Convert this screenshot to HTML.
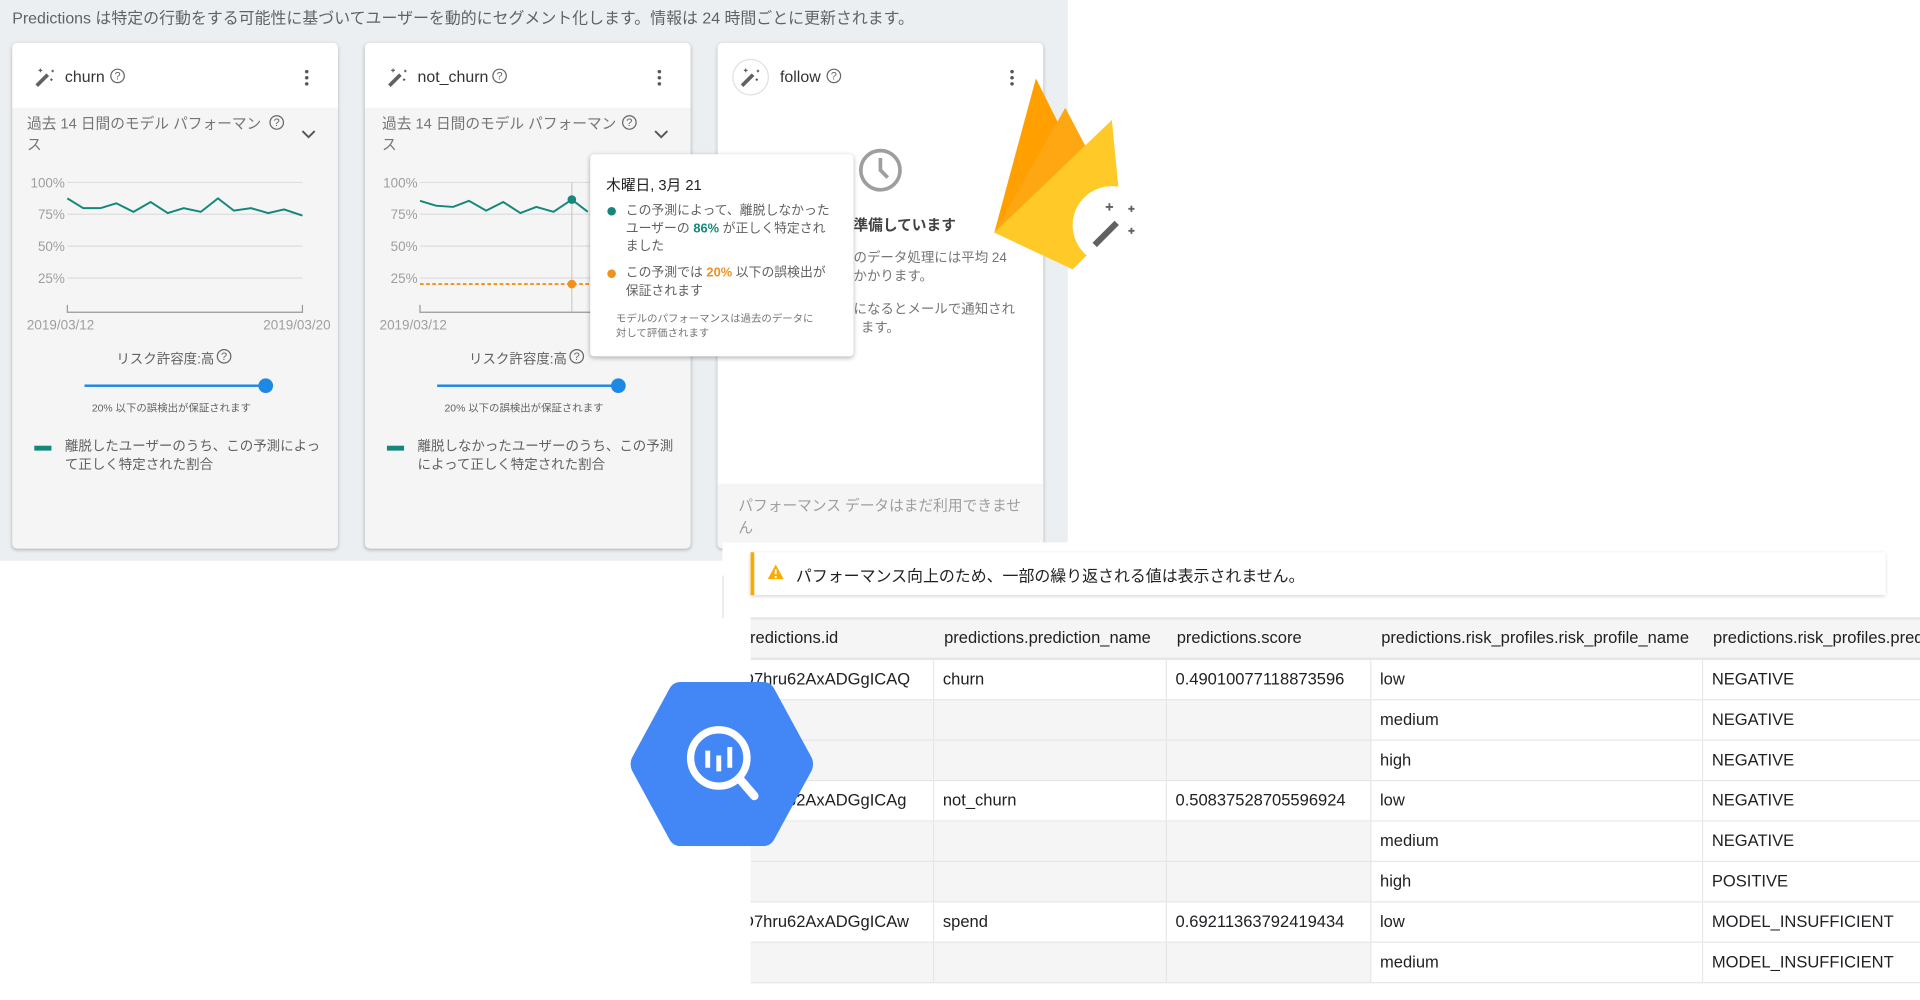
<!DOCTYPE html>
<html><head><meta charset="utf-8">
<style>
*{margin:0;padding:0;box-sizing:border-box}
html,body{width:1920px;height:1000px;overflow:hidden;background:#fff;font-family:"Liberation Sans","Noto Sans CJK JP",sans-serif}
#w{position:absolute;left:0;top:0;width:1568px;height:817px;transform:scale(1.22449);transform-origin:0 0}
.a{position:absolute;white-space:nowrap}
.card{position:absolute;top:35px;width:266px;height:413px;background:#f5f5f5;border-radius:4px;box-shadow:0 1px 3px rgba(0,0,0,.25);overflow:hidden}
.hd{position:absolute;left:0;top:0;width:100%;height:53px;background:#fff}
.g{color:#757575;font-size:12px}
.cell{position:absolute;height:33px;border-bottom:1px solid #e6e6e6;border-right:1px solid #e6e6e6;font-size:13.5px;line-height:32px;padding-left:7px;overflow:hidden;white-space:nowrap;color:#202124}
</style></head><body><div id="w">
<div class="a" style="left:0;top:0;width:872px;height:458px;background:#eceff1"></div>
<div class="a" style="left:10px;top:4px;font-size:13px;color:#5f6368">Predictions は特定の行動をする可能性に基づいてユーザーを動的にセグメント化します。情報は 24 時間ごとに更新されます。</div>

<!-- card 1 -->
<div class="card" style="left:10px">
 <div class="hd"></div>
 <svg class="a" style="left:17px;top:19px" width="20" height="18" viewBox="0 0 20 18"><path d="M3 16L12 7" stroke="#616161" stroke-width="3"/><path d="M6 2v3M4.5 3.5h3M16 3v2M15 4h2M15 10v2M14 11h2" stroke="#616161" stroke-width="1"/></svg>
 <div class="a" style="left:43px;top:20px;font-size:13px;color:#333">churn</div>
 <div class="a" style="left:80px;top:21px;width:12px;height:12px;border:1px solid #666;border-radius:50%;font-size:9px;line-height:10px;text-align:center;color:#666">?</div>
 <div class="a" style="left:239px;top:21px;width:3px;height:14px;background:radial-gradient(circle,#555 1.3px,transparent 1.6px) 0 0/3px 5px"></div>
 <div class="a g" style="left:12px;top:58px;line-height:17px">過去 14 日間のモデル パフォーマン<br>ス</div>
 <div class="a" style="left:210px;top:59px;width:12px;height:12px;border:1px solid #666;border-radius:50%;font-size:9px;line-height:10px;text-align:center;color:#666">?</div>
 <svg class="a" style="left:236px;top:71px" width="12" height="8"><path d="M1 1l5 5 5-5" stroke="#555" stroke-width="1.6" fill="none"/></svg>
 <svg class="a" style="left:0;top:100px" width="266" height="140"><g stroke="#ddd"><path d="M45 14H237M45 40H237M45 66H237M45 92H237"/></g><path d="M45 114v6H237v-6" stroke="#999" fill="none"/><g fill="#9e9e9e" font-size="11" text-anchor="end"><text x="43" y="18">100%</text><text x="43" y="44">75%</text><text x="43" y="70">50%</text><text x="43" y="96">25%</text></g><polyline fill="none" stroke="#13887a" stroke-width="1.6" points="45,27 58,35 72,35 85,31 99,38 113,30 127,39 140,35 154,38 168,27 181,37 195,35 209,39 222,36 237,41"/><g fill="#9e9e9e" font-size="11"><text x="12" y="134">2019/03/12</text><text x="205" y="134">2019/03/20</text></g></svg>
 <div class="a" style="left:85px;top:250px;font-size:11px;color:#616161">リスク許容度:高</div>
 <div class="a" style="left:167px;top:250px;width:12px;height:12px;border:1px solid #666;border-radius:50%;font-size:9px;line-height:10px;text-align:center;color:#666">?</div>
 <div class="a" style="left:59px;top:279px;width:148px;height:2px;background:#1e88e5"></div>
 <div class="a" style="left:201px;top:274px;width:12px;height:12px;border-radius:50%;background:#1e88e5"></div>
 <div class="a" style="left:65px;top:292px;font-size:8.5px;color:#616161">20% 以下の誤検出が保証されます</div>
 <div class="a" style="left:18px;top:329px;width:14px;height:4px;background:#13887a"></div>
 <div class="a" style="left:43px;top:323px;line-height:15px;font-size:11px;color:#616161">離脱したユーザーのうち、この予測によっ<br>て正しく特定された割合</div>
</div>

<!-- card 2 -->
<div class="card" style="left:298px">
 <div class="hd"></div>
 <svg class="a" style="left:17px;top:19px" width="20" height="18" viewBox="0 0 20 18"><path d="M3 16L12 7" stroke="#616161" stroke-width="3"/><path d="M6 2v3M4.5 3.5h3M16 3v2M15 4h2M15 10v2M14 11h2" stroke="#616161" stroke-width="1"/></svg>
 <div class="a" style="left:43px;top:20px;font-size:13px;color:#333">not_churn</div>
 <div class="a" style="left:104px;top:21px;width:12px;height:12px;border:1px solid #666;border-radius:50%;font-size:9px;line-height:10px;text-align:center;color:#666">?</div>
 <div class="a" style="left:239px;top:21px;width:3px;height:14px;background:radial-gradient(circle,#555 1.3px,transparent 1.6px) 0 0/3px 5px"></div>
 <div class="a g" style="left:14px;top:58px;line-height:17px">過去 14 日間のモデル パフォーマン<br>ス</div>
 <div class="a" style="left:210px;top:59px;width:12px;height:12px;border:1px solid #666;border-radius:50%;font-size:9px;line-height:10px;text-align:center;color:#666">?</div>
 <svg class="a" style="left:236px;top:71px" width="12" height="8"><path d="M1 1l5 5 5-5" stroke="#555" stroke-width="1.6" fill="none"/></svg>
 <svg class="a" style="left:0;top:100px" width="266" height="140"><g stroke="#ddd"><path d="M45 14H237M45 40H237M45 66H237M45 92H237"/></g><path d="M169 14V120" stroke="#ccc"/><path d="M45 114v6H237" stroke="#999" fill="none"/><g fill="#9e9e9e" font-size="11" text-anchor="end"><text x="43" y="18">100%</text><text x="43" y="44">75%</text><text x="43" y="70">50%</text><text x="43" y="96">25%</text></g><polyline fill="none" stroke="#13887a" stroke-width="1.6" points="45,29 58,33 72,34 85,29 99,37 113,30 127,39 140,34 154,38 169,28 182,38"/><circle cx="169" cy="28" r="3.5" fill="#13887a"/><path d="M45 97H185" stroke="#f0901e" stroke-width="1.5" stroke-dasharray="3 2"/><circle cx="169" cy="97" r="3.5" fill="#f0901e"/><g fill="#9e9e9e" font-size="11"><text x="12" y="134">2019/03/12</text></g></svg>
 <div class="a" style="left:85px;top:250px;font-size:11px;color:#616161">リスク許容度:高</div>
 <div class="a" style="left:167px;top:250px;width:12px;height:12px;border:1px solid #666;border-radius:50%;font-size:9px;line-height:10px;text-align:center;color:#666">?</div>
 <div class="a" style="left:59px;top:279px;width:148px;height:2px;background:#1e88e5"></div>
 <div class="a" style="left:201px;top:274px;width:12px;height:12px;border-radius:50%;background:#1e88e5"></div>
 <div class="a" style="left:65px;top:292px;font-size:8.5px;color:#616161">20% 以下の誤検出が保証されます</div>
 <div class="a" style="left:18px;top:329px;width:14px;height:4px;background:#13887a"></div>
 <div class="a" style="left:43px;top:323px;line-height:15px;font-size:11px;color:#616161">離脱しなかったユーザーのうち、この予測<br>によって正しく特定された割合</div>
</div>

<!-- card 3 -->
<div class="card" style="left:586px;background:#fff">
 <div class="a" style="left:12px;top:13px;width:30px;height:30px;border:1px solid #e0e0e0;border-radius:50%"></div>
 <svg class="a" style="left:17px;top:19px" width="20" height="18" viewBox="0 0 20 18"><path d="M3 16L12 7" stroke="#616161" stroke-width="3"/><path d="M6 2v3M4.5 3.5h3M16 3v2M15 4h2M15 10v2M14 11h2" stroke="#616161" stroke-width="1"/></svg>
 <div class="a" style="left:51px;top:20px;font-size:13px;color:#333">follow</div>
 <div class="a" style="left:89px;top:21px;width:12px;height:12px;border:1px solid #666;border-radius:50%;font-size:9px;line-height:10px;text-align:center;color:#666">?</div>
 <div class="a" style="left:239px;top:21px;width:3px;height:14px;background:radial-gradient(circle,#555 1.3px,transparent 1.6px) 0 0/3px 5px"></div>
 <svg class="a" style="left:114px;top:85px" width="38" height="38"><circle cx="19" cy="19" r="16" stroke="#9e9e9e" stroke-width="3" fill="none"/><path d="M19 9v10l6 6" stroke="#9e9e9e" stroke-width="3" fill="none"/></svg>
 <div class="a" style="left:75px;top:140px;font-size:12px;font-weight:bold;color:#424242">予測を準備しています</div>
 <div class="a g" style="left:89px;top:169px;line-height:15px;font-size:11px">初回のデータ処理には平均 24<br>時間かかります。</div>
 <div class="a g" style="left:34px;top:209px;font-size:11px">結果が利用可能になるとメールで通知され</div>
 <div class="a g" style="left:117px;top:224px;font-size:11px">ます。</div>
 <div class="a" style="left:0;top:360px;width:266px;height:60px;background:#f5f5f5"></div>
 <div class="a g" style="left:17px;top:369px;line-height:18px;color:#9e9e9e">パフォーマンス データはまだ利用できませ<br>ん</div>
</div>

<!-- tooltip -->
<div class="a" style="left:482px;top:126px;width:215px;height:165px;background:#fff;border-radius:3px;box-shadow:0 1px 4px rgba(0,0,0,.3)">
 <div class="a" style="left:13px;top:16px;font-size:12px;color:#212121">木曜日, 3月 21</div>
 <div class="a" style="left:14px;top:43px;width:7px;height:7px;border-radius:50%;background:#13887a"></div>
 <div class="a" style="left:29px;top:39px;font-size:10.5px;line-height:14.5px;color:#616161">この予測によって、離脱しなかった<br>ユーザーの <b style="color:#13887a">86%</b> が正しく特定され<br>ました</div>
 <div class="a" style="left:14px;top:94px;width:7px;height:7px;border-radius:50%;background:#f0901e"></div>
 <div class="a" style="left:29px;top:90px;font-size:10.5px;line-height:14.5px;color:#616161">この予測では <b style="color:#f0901e">20%</b> 以下の誤検出が<br>保証されます</div>
 <div class="a" style="left:21px;top:128px;font-size:8.5px;line-height:12px;color:#757575">モデルのパフォーマンスは過去のデータに<br>対して評価されます</div>
</div>

<!-- firebase -->
<svg class="a" style="left:808px;top:62px" width="128" height="162" viewBox="0 0 128 162">
 <path d="M4 128L38 2l20 40z" fill="#ffa000"/>
 <path d="M4 128L55 82 58 42z" fill="#f57c00"/>
 <path d="M4 128L62 26l20 38z" fill="#ffa712"/>
 <path d="M4 128L100 36l8 82-40 40z" fill="#ffca28"/>
 <circle cx="100" cy="122" r="32" fill="#fff"/>
 <path d="M86 138L104 120" stroke="#616161" stroke-width="5"/>
 <path d="M98 104v6M95 107h6M116 106v5M113.5 108.5h5M116 124v5M113.5 126.5h5" stroke="#616161" stroke-width="1.5"/>
</svg>

<!-- bottom right -->
<div class="a" style="left:590px;top:443px;width:978px;height:360px;background:#fff"></div>
<div class="a" style="left:590px;top:470px;width:1px;height:35px;background:#e0e0e0"></div>
<div class="a" style="left:613px;top:451px;width:927px;height:35px;background:#fff;border-left:3px solid #f9ab00;box-shadow:0 1px 3px rgba(0,0,0,.2)"></div>
<svg class="a" style="left:626px;top:460px" width="15" height="14"><path d="M7.5 1L14 13H1z" fill="#f9ab00"/><path d="M7.5 5v4M7.5 10.5v1.5" stroke="#fff" stroke-width="1.6"/></svg>
<div class="a" style="left:650px;top:460px;font-size:13px;color:#202124">パフォーマンス向上のため、一部の繰り返される値は表示されません。</div>

<div class="a" style="left:613px;top:504px;width:955px;height:300px;overflow:hidden">
 <div class="a" style="left:0;top:0;width:955px;height:35px;background:#f5f5f5;border-top:2px solid #e6e6e6;border-bottom:2px solid #e6e6e6"></div>
 <div class="a" style="left:-8px;top:9px;font-size:13.5px;color:#202124">predictions.id</div>
 <div class="a" style="left:158px;top:9px;font-size:13.5px;color:#202124">predictions.prediction_name</div>
 <div class="a" style="left:348px;top:9px;font-size:13.5px;color:#202124">predictions.score</div>
 <div class="a" style="left:515px;top:9px;font-size:13.5px;color:#202124">predictions.risk_profiles.risk_profile_name</div>
 <div class="a" style="left:786px;top:9px;font-size:13.5px;color:#202124">predictions.risk_profiles.prediction</div>
 <div id="tb"></div>
</div>

<!-- bigquery -->
<svg class="a" style="left:514px;top:557px" width="151" height="134" viewBox="0 0 151 134">
 <path d="M42 0H109Q115 0 118 5L149 62Q151 67 149 72L118 129Q115 134 109 134H42Q36 134 33 129L2 72Q0 67 2 62L33 5Q36 0 42 0z" fill="#4386f6"/>
 <circle cx="73" cy="62" r="23" stroke="#fff" stroke-width="6" fill="none"/>
 <path d="M90 79L102 93" stroke="#fff" stroke-width="7" stroke-linecap="round"/>
 <path d="M64 56v14M73 60v13M82 53v17" stroke="#fff" stroke-width="4"/>
</svg>

<script>
var rows=[["D7hru62AxADGgICAQ","churn","0.49010077118873596","low","NEGATIVE"],["","","","medium","NEGATIVE"],["","","","high","NEGATIVE"],["D7hru62AxADGgICAg","not_churn","0.50837528705596924","low","NEGATIVE"],["","","","medium","NEGATIVE"],["","","","high","POSITIVE"],["D7hru62AxADGgICAw","spend","0.69211363792419434","low","MODEL_INSUFFICIENT"],["","","","medium","MODEL_INSUFFICIENT"]];
var xs=[0,150,340,507,778,960],h="";
rows.forEach(function(r,i){var y=35+i*33;for(var c=0;c<5;c++){var bg=(r[0]===""&&c<3)?"#f5f5f5":"#fff";var off=c==0?"text-indent:-14px;":"";h+='<div class="cell" style="left:'+xs[c]+'px;top:'+y+'px;width:'+(xs[c+1]-xs[c])+'px;background:'+bg+';'+off+'">'+r[c]+'</div>';}});
document.getElementById("tb").outerHTML=h;
</script>
</div></body></html>
